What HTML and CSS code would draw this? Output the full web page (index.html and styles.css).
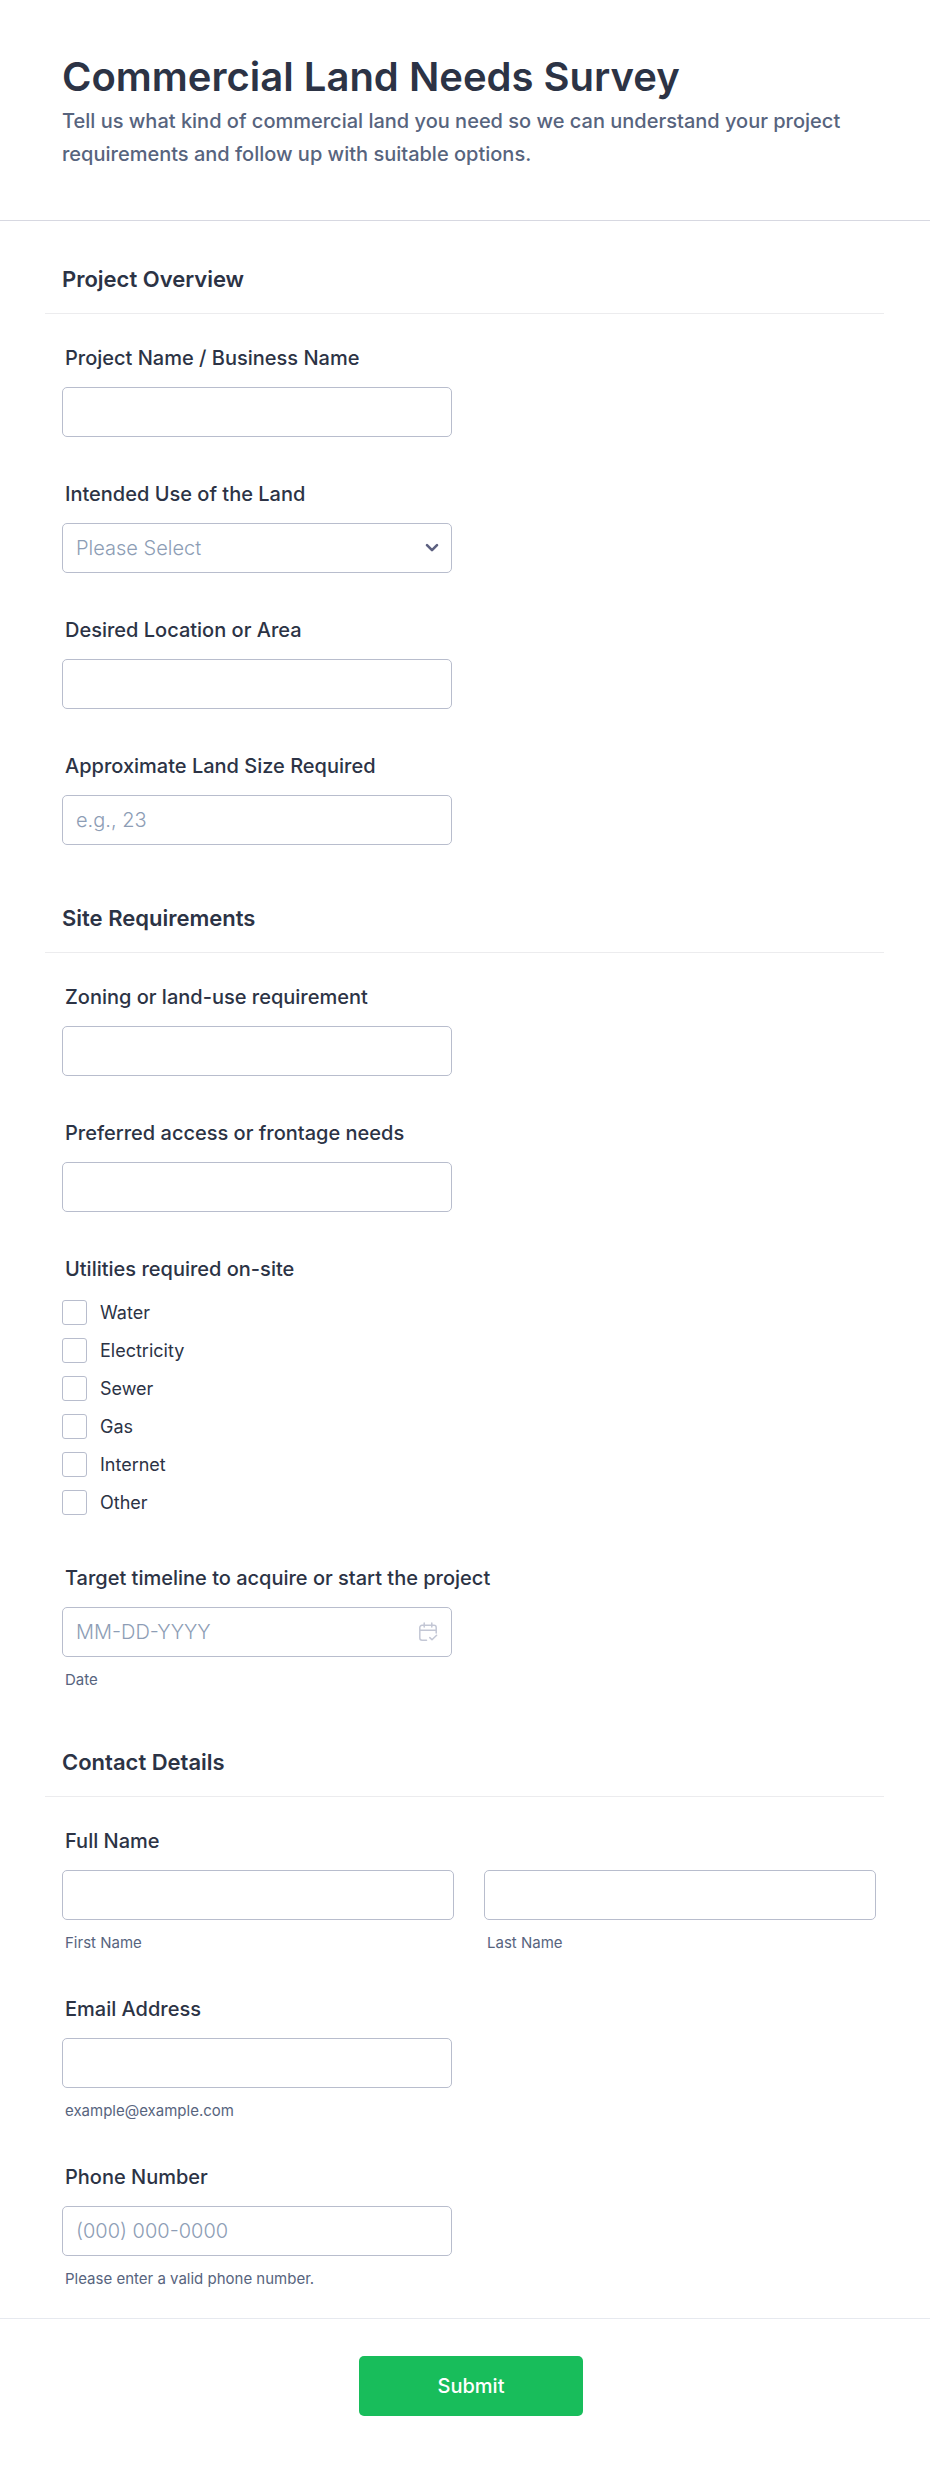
FILE: index.html
```html
<!DOCTYPE html>
<html lang="en">
<head>
<meta charset="utf-8">
<meta name="viewport" content="width=device-width, initial-scale=1">
<title>Commercial Land Needs Survey</title>
<link rel="stylesheet" href="styles.css">
</head>
<body>
<form class="form">
  <header class="form-header">
    <h1 class="form-title">Commercial Land Needs Survey</h1>
    <p class="form-intro">Tell us what kind of commercial land you need so we can understand your project requirements and follow up with suitable options.</p>
  </header>

  <section class="section">
    <h2 class="section-title">Project Overview</h2>
    <div class="fields">
      <div class="field">
        <label class="label" for="project">Project Name / Business Name</label>
        <input class="control" id="project" type="text">
      </div>
      <div class="field">
        <label class="label" for="use">Intended Use of the Land</label>
        <div class="control-wrap">
          <select class="control select" id="use"><option value="">Please Select</option></select>
          <svg class="chevron" viewBox="0 0 14 10" aria-hidden="true"><path d="M2 2.200l5 5 5-5"/></svg>
        </div>
      </div>
      <div class="field">
        <label class="label" for="location">Desired Location or Area</label>
        <input class="control" id="location" type="text">
      </div>
      <div class="field">
        <label class="label" for="size">Approximate Land Size Required</label>
        <input class="control" id="size" type="text" placeholder="e.g., 23">
      </div>
    </div>
  </section>

  <section class="section">
    <h2 class="section-title">Site Requirements</h2>
    <div class="fields">
      <div class="field">
        <label class="label" for="zoning">Zoning or land-use requirement</label>
        <input class="control" id="zoning" type="text">
      </div>
      <div class="field">
        <label class="label" for="access">Preferred access or frontage needs</label>
        <input class="control" id="access" type="text">
      </div>
      <div class="field" role="group" aria-labelledby="utilities">
        <span class="label" id="utilities">Utilities required on-site</span>
        <div class="options">
          <label class="option"><input class="checkbox" type="checkbox">Water</label>
          <label class="option"><input class="checkbox" type="checkbox">Electricity</label>
          <label class="option"><input class="checkbox" type="checkbox">Sewer</label>
          <label class="option"><input class="checkbox" type="checkbox">Gas</label>
          <label class="option"><input class="checkbox" type="checkbox">Internet</label>
          <label class="option"><input class="checkbox" type="checkbox">Other</label>
        </div>
      </div>
      <div class="field">
        <label class="label" for="date">Target timeline to acquire or start the project</label>
        <div class="control-wrap">
          <input class="control" id="date" type="text" placeholder="MM-DD-YYYY" aria-describedby="date-hint">
          <svg class="calendar" viewBox="0 0 20 20" aria-hidden="true"><path d="M8.500 18.200H4A2.200 2.200 0 0 1 1.800 16V5.500A2.200 2.200 0 0 1 4 3.300h12a2.200 2.200 0 0 1 2.200 2.200V11M1.800 8.200h16.400M6.200 1v4M13.800 1v4M11.800 15.600l2.200 2.200 4.600-4.600"/></svg>
        </div>
        <span class="hint" id="date-hint">Date</span>
      </div>
    </div>
  </section>

  <section class="section">
    <h2 class="section-title">Contact Details</h2>
    <div class="fields">
      <div class="field" role="group" aria-labelledby="fullname">
        <span class="label" id="fullname">Full Name</span>
        <div class="name-row">
          <div class="name-part">
            <input class="control" id="first" type="text">
            <label class="hint" for="first">First Name</label>
          </div>
          <div class="name-part">
            <input class="control" id="last" type="text">
            <label class="hint" for="last">Last Name</label>
          </div>
        </div>
      </div>
      <div class="field">
        <label class="label" for="email">Email Address</label>
        <input class="control" id="email" type="email" aria-describedby="email-hint">
        <span class="hint" id="email-hint">example@example.com</span>
      </div>
      <div class="field">
        <label class="label" for="phone">Phone Number</label>
        <input class="control" id="phone" type="tel" placeholder="(000) 000-0000" aria-describedby="phone-hint">
        <span class="hint" id="phone-hint">Please enter a valid phone number.</span>
      </div>
    </div>
  </section>

  <footer class="form-footer">
    <button class="submit" type="submit">Submit</button>
  </footer>
</form>
</body>
</html>
```
FILE: styles.css
```css
* {
  box-sizing: border-box;
}

body {
  margin: 0;
  background: #fff;
  color: #2c3345;
  font-family: Inter, "Liberation Sans", sans-serif;
}

.form-header {
  padding: 53px 62px 49px;
  border-bottom: 1px solid #d7d8e1;
}

.form-title {
  margin: 0;
  font-size: 40px;
  font-weight: 600;
  line-height: 48px;
}

.form-intro {
  margin: 4px 0 0;
  color: #57647e;
  font-size: 20px;
  font-weight: 500;
  line-height: 33px;
}

.section {
  padding: 0 46px 0 45px;
}

.section-title {
  margin: 0;
  padding: 46px 17px 22px;
  border-bottom: 1px solid #ececee;
  font-size: 22px;
  font-weight: 600;
  line-height: 24px;
}

.section + .section .section-title {
  padding-top: 61px;
}

.fields {
  display: flex;
  flex-direction: column;
  gap: 47px;
  padding: 34px 8px 0 17px;
}

.field {
  display: flex;
  flex-direction: column;
}

.label {
  margin-bottom: 19px;
  padding-left: 3px;
  font-size: 20px;
  font-weight: 500;
  line-height: 20px;
}

.control {
  width: 100%;
  max-width: 390px;
  height: 50px;
  padding: 0 13px;
  border: 1px solid #b8bdcd;
  border-radius: 5px;
  background: #fff;
  color: #2c3345;
  font-family: inherit;
  font-size: 20px;
  font-weight: 300;
}

.control::placeholder {
  color: #8d9db5;
  opacity: 1;
}

.control-wrap {
  position: relative;
  max-width: 390px;
}

.select {
  display: block;
  appearance: none;
  color: #8d9db5;
}

.chevron,
.calendar {
  position: absolute;
  top: 0;
  bottom: 0;
  margin: auto 0;
  fill: none;
  pointer-events: none;
}

.chevron {
  right: 13px;
  width: 14px;
  height: 10px;
  stroke: #5c6080;
  stroke-width: 2.6;
  stroke-linecap: round;
  stroke-linejoin: round;
}

.calendar {
  right: 14px;
  width: 20px;
  height: 20px;
  stroke: #c3c7d5;
  stroke-width: 1.5;
  stroke-linecap: round;
  stroke-linejoin: round;
}

.options {
  display: flex;
  flex-direction: column;
  gap: 13px;
  padding: 2px 0 6px;
}

.option {
  display: flex;
  align-items: center;
  gap: 13px;
  font-size: 18px;
  line-height: 25px;
}

.checkbox {
  width: 25px;
  height: 25px;
  margin: 0;
  appearance: none;
  border: 1px solid #b8bdcd;
  border-radius: 3px;
  background: #fff;
}

.checkbox:checked {
  background: #18bd5b;
}

.hint {
  margin-top: 14px;
  padding-left: 3px;
  color: #57647e;
  font-size: 15px;
  line-height: 18px;
}

.name-row {
  display: grid;
  grid-template-columns: 1fr 1fr;
  gap: 30px;
}

.name-part {
  display: flex;
  flex-direction: column;
}

.name-part .control {
  max-width: none;
}

.form-footer {
  display: flex;
  justify-content: center;
  margin-top: 30px;
  padding: 37px 16px 49px 28px;
  border-top: 1px solid #e6e9ef;
}

.submit {
  width: 224px;
  height: 60px;
  border: 0;
  border-radius: 5px;
  background: #18bd5b;
  color: #fff;
  font-family: inherit;
  font-size: 20px;
  font-weight: 500;
}
```
